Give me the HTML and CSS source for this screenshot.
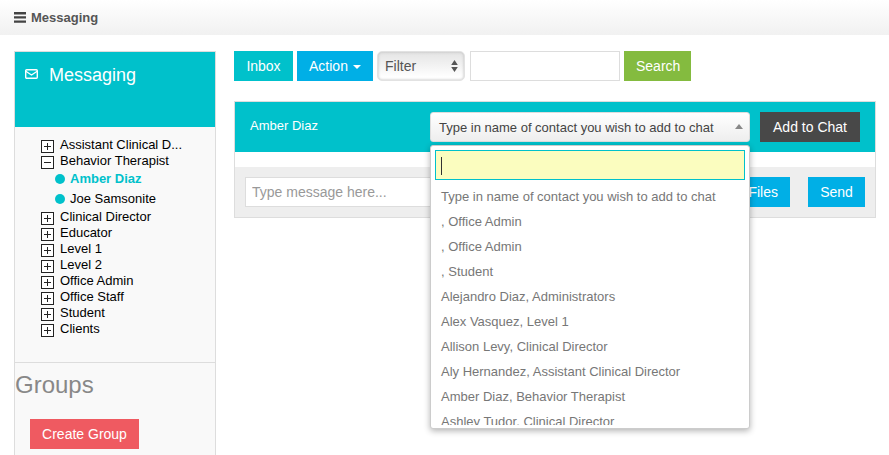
FILE: index.html
```html
<!DOCTYPE html>
<html lang="en">
<head>
<meta charset="utf-8">
<title>Messaging</title>
<link rel="stylesheet" href="styles.css">
</head>
<body>
<header class="topbar">
  <svg class="bars" width="12" height="11" viewBox="0 0 12 11"><path d="M0 0h12v2.4H0zM0 4.2h12v2.4H0zM0 8.4h12v2.4H0z" fill="#444"/></svg>
  <span>Messaging</span>
</header>
<div class="main">
  <aside class="sidebar">
    <div class="side-head">
      <svg class="env" width="13" height="10" viewBox="0 0 13 10"><rect x=".7" y=".7" width="11.6" height="8.6" rx="1" fill="none" stroke="#fff" stroke-width="1.4"/><path d="M.8 2.2 6.5 6l5.7-3.8" fill="none" stroke="#fff" stroke-width="1.3"/></svg>
      <h2>Messaging</h2>
    </div>
    <ul class="tree">
      <li class="node"><span class="box plus"></span>Assistant Clinical D...</li>
      <li class="node"><span class="box"></span>Behavior Therapist</li>
      <li class="leaf active"><span class="dot"></span>Amber Diaz</li>
      <li class="leaf"><span class="dot"></span>Joe Samsonite</li>
      <li class="node"><span class="box plus"></span>Clinical Director</li>
      <li class="node"><span class="box plus"></span>Educator</li>
      <li class="node"><span class="box plus"></span>Level 1</li>
      <li class="node"><span class="box plus"></span>Level 2</li>
      <li class="node"><span class="box plus"></span>Office Admin</li>
      <li class="node"><span class="box plus"></span>Office Staff</li>
      <li class="node"><span class="box plus"></span>Student</li>
      <li class="node"><span class="box plus"></span>Clients</li>
    </ul>
    <div class="groups">
      <h3>Groups</h3>
      <button class="btn red create">Create Group</button>
    </div>
  </aside>
  <section class="content">
    <div class="toolbar">
      <button class="btn teal inbox">Inbox</button>
      <button class="btn blue action">Action<span class="caret"></span></button>
      <div class="select">Filter
        <svg width="7" height="12" viewBox="0 0 7 12"><path d="M3.5 0 6.8 5H.2zM3.5 12 .2 7h6.6z" fill="#555"/></svg>
      </div>
      <input class="field search-input" type="text" aria-label="Search">
      <button class="btn green search">Search</button>
    </div>
    <div class="panel">
      <div class="panel-head">
        <span class="name">Amber Diaz</span>
        <div class="chosen-wrap">
          <div class="chosen">Type in name of contact you wish to add to chat<span class="up"></span></div>
          <div class="drop">
            <div class="drop-search"><span class="cursor"></span></div>
            <ul class="options">
              <li>Type in name of contact you wish to add to chat</li>
              <li>, Office Admin</li>
              <li>, Office Admin</li>
              <li>, Student</li>
              <li>Alejandro Diaz, Administrators</li>
              <li>Alex Vasquez, Level 1</li>
              <li>Allison Levy, Clinical Director</li>
              <li>Aly Hernandez, Assistant Clinical Director</li>
              <li>Amber Diaz, Behavior Therapist</li>
              <li>Ashley Tudor, Clinical Director</li>
            </ul>
          </div>
        </div>
        <button class="btn dark add">Add to Chat</button>
      </div>
      <div class="panel-gap"></div>
      <div class="composer">
        <input class="field message" type="text" placeholder="Type message here...">
        <button class="btn blue files">Files</button>
        <button class="btn blue send">Send</button>
      </div>
    </div>
  </section>
</div>
</body>
</html>
```

FILE: styles.css
```css
* { box-sizing: border-box; }
html, body { margin: 0; height: 455px; overflow: hidden; }
body { font-family: "Liberation Sans", Arial, sans-serif; font-size: 14px; color: #555; background: #fff; }
ul { list-style: none; margin: 0; padding: 0; }
h2, h3 { margin: 0; font-weight: 400; }

.topbar { height: 35px; padding-left: 14px; display: flex; align-items: center; gap: 5px; background: linear-gradient(#fff, #f1f1f1); font-size: 13px; font-weight: 700; color: #555; }
.bars { flex: none; }

.main { display: flex; gap: 18px; padding: 16px 13px 0 14px; align-items: flex-start; }
.sidebar { width: 202px; height: 420px; flex: none; border: 1px solid #ddd; background: #f9f9f9; }
.side-head { height: 75px; background: #00c1cb; color: #fff; padding: 12px 10px; display: flex; align-items: flex-start; gap: 11px; }
.side-head h2 { font-size: 18px; line-height: 22px; }
.env { margin-top: 5px; flex: none; }

.tree { padding: 10px 0 0 26px; height: 235px; font-size: 13px; color: #000; }
.node { height: 16px; line-height: 16px; display: flex; align-items: center; gap: 6px; }
.box { width: 13px; height: 13px; border: 1px solid #222; position: relative; flex: none; margin-top: 2px; background: #fff; }
.box::before { content: ""; position: absolute; left: 2px; right: 2px; top: 5px; height: 1px; background: #222; }
.plus::after { content: ""; position: absolute; top: 2px; bottom: 2px; left: 5px; width: 1px; background: #222; }
.leaf { height: 20px; line-height: 20px; display: flex; align-items: center; gap: 5px; padding-left: 14px; }
.dot { width: 10px; height: 10px; border-radius: 50%; background: #00c1cb; flex: none; }
.active { color: #00c1cb; font-weight: 700; }

.groups { border-top: 1px solid #ddd; padding-top: 8px; }
.groups h3 { font-size: 24px; line-height: 28px; color: #888; }
.create { margin: 20px 0 0 15px; width: 109px; }

.btn { border: 0; height: 30px; padding: 0 12px; font: 14px "Liberation Sans", Arial, sans-serif; color: #fff; flex: none; }
.teal { background: #00c1cb; }
.blue { background: #00afe6; }
.green { background: #84bb3f; }
.red { background: #ef5a61; }
.dark { background: #484848; }

.content { width: 642px; flex: none; }
.toolbar { display: flex; height: 30px; }
.inbox { width: 59px; }
.action { width: 76px; margin-left: 4px; }
.caret { display: inline-block; margin-left: 5px; vertical-align: 2px; border-top: 4px solid #fff; border-left: 4px solid transparent; border-right: 4px solid transparent; }
.select { width: 88px; margin-left: 4px; padding: 0 6px 0 7px; display: flex; align-items: center; justify-content: space-between; border: 1px solid #e2e2e2; border-radius: 5px; background: linear-gradient(#e4e4e4, #fff 90%); box-shadow: inset 0 0 3px #bbb; color: #555; }
.field { border: 1px solid #ddd; height: 30px; background: #fff; padding: 0 6px; font: 14px "Liberation Sans", Arial, sans-serif; color: #555; outline: 0; }
.field::placeholder { color: #999; opacity: 1; }
.search-input { width: 150px; margin-left: 5px; }
.search { width: 67px; margin-left: 4px; }

.panel { margin-top: 20px; height: 117px; border: 1px solid #ddd; }
.panel-head { height: 50px; background: #00c1cb; display: flex; align-items: flex-start; padding: 10px 0 0 15px; }
.name { width: 180px; margin-top: 6px; font-size: 13px; line-height: 16px; color: #fff; }
.chosen-wrap { width: 320px; position: relative; flex: none; }
.chosen { height: 30px; padding: 0 8px; line-height: 30px; font-size: 13px; border: 1px solid #ddd; border-radius: 3px; background: linear-gradient(#fff, #eee); color: #444; white-space: nowrap; position: relative; }
.up { position: absolute; right: 6px; top: 11px; border-bottom: 5px solid #888; border-left: 4px solid transparent; border-right: 4px solid transparent; }
.drop { position: absolute; z-index: 2; left: 0; top: 33px; width: 320px; height: 284px; padding: 4px; background: #fff; border: 1px solid #ccc; border-radius: 3px; box-shadow: 0 2px 6px rgba(0,0,0,.3); overflow: hidden; }
.drop-search { height: 30px; border: 1px solid #00c1cb; background: #fbfdbf; padding: 6px 0 0 5px; }
.cursor { display: block; width: 1px; height: 18px; background: #333; }
.options { margin-top: 4px; padding-left: 6px; height: 241px; overflow: hidden; font-size: 13px; color: #777; }
.options li { height: 25px; line-height: 25px; white-space: nowrap; }
.add { width: 100px; margin-left: 10px; }

.panel-gap { height: 15px; }
.composer { height: 50px; background: #eee; display: flex; padding: 10px 10px 0; }
.message { width: 440px; }
.files { width: 105px; text-align: right; }
.send { width: 57px; margin-left: 18px; }
```
